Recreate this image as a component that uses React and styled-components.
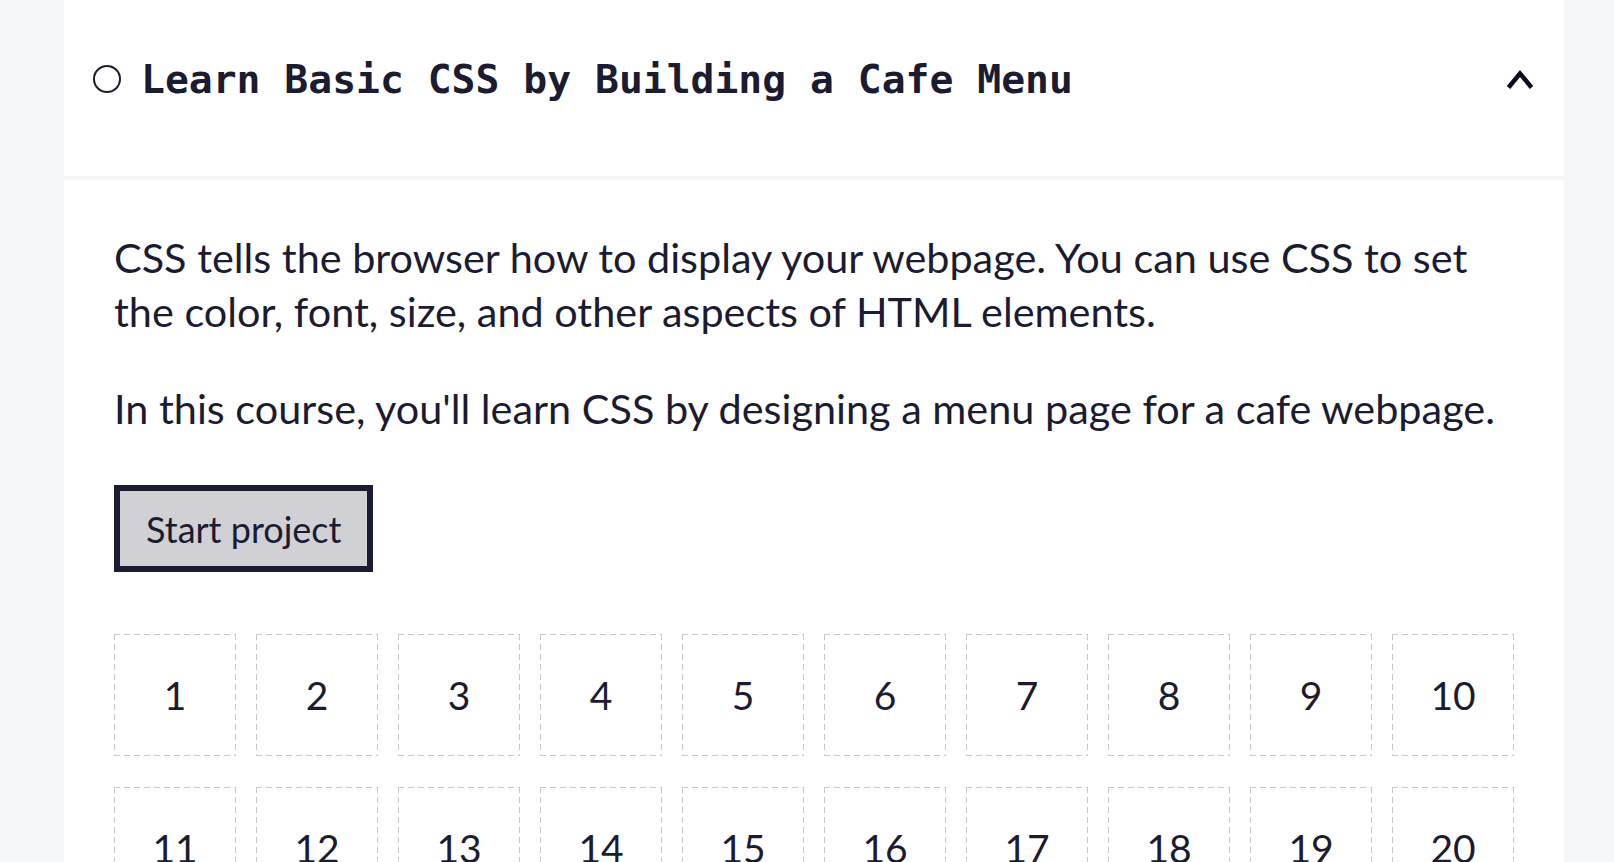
import React from "react";
import styled, { createGlobalStyle } from "styled-components";

const Global = createGlobalStyle`
  html, body { margin: 0; padding: 0; }
  body {
    background: #f5f6f7;
    color: #1b1b32;
    font-family: Lato, "Noto Sans", sans-serif;
  }
`;

const Page = styled.div`
  width: 1500px;
  margin-left: 64px;
  height: 862px;
  overflow: hidden;
`;

const Header = styled.div`
  height: 176px;
  box-sizing: border-box;
  background: #ffffff;
  display: flex;
  align-items: center;
  padding: 0 30px 18px 29px;
  margin-bottom: 4px;
`;

const Circle = styled.span`
  width: 28px;
  height: 28px;
  box-sizing: border-box;
  border: 2px solid #1b1b32;
  border-radius: 50%;
  flex: none;
  margin-right: 20px;
`;

const Title = styled.h3`
  margin: 0;
  flex: 1;
  font-family: "DejaVu Sans Mono", "Liberation Mono", monospace;
  font-weight: 700;
  font-size: 39.7px;
  color: #1b1b32;
`;

const Chevron = styled.svg`
  width: 28px;
  height: 20px;
  flex: none;
`;

const Body = styled.div`
  background: #ffffff;
  padding: 50px 50px 60px;
`;

const Para = styled.p`
  margin: 0;
  font-size: 41.4px;
  line-height: 54px;
  color: #1b1b32;
  & + & {
    margin-top: 43px;
  }
`;

const StartButton = styled.button`
  display: block;
  margin: 50px 0 62px;
  height: 87px;
  padding: 0 26px;
  background: #d0d0d5;
  border: 6px solid #1b1b32;
  color: #1b1b32;
  font-family: Lato, "Noto Sans", sans-serif;
  font-size: 36px;
  cursor: pointer;
`;

const Grid = styled.div`
  display: grid;
  grid-template-columns: repeat(10, 122px);
  column-gap: 20px;
  row-gap: 31px;
`;

const dash = "#c6c6cc";

const Step = styled.div`
  height: 122px;
  box-sizing: border-box;
  display: flex;
  align-items: center;
  justify-content: center;
  font-size: 39px;
  color: #1b1b32;
  background-image:
    repeating-linear-gradient(to right, ${dash} 0 6px, transparent 6px 10px),
    repeating-linear-gradient(to right, ${dash} 0 6px, transparent 6px 10px),
    repeating-linear-gradient(to bottom, ${dash} 0 6px, transparent 6px 10px),
    repeating-linear-gradient(to bottom, ${dash} 0 6px, transparent 6px 10px);
  background-size: 100% 1px, 100% 1px, 1px 100%, 1px 100%;
  background-position: 0 0, 0 100%, 0 0, 100% 0;
  background-repeat: no-repeat;
`;

export default function App() {
  const steps = Array.from({ length: 20 }, (_, i) => i + 1);
  return (
    <>
      <Global />
      <Page>
        <Header>
          <Circle />
          <Title>Learn Basic CSS by Building a Cafe Menu</Title>
          <Chevron viewBox="0 0 28 20">
            <path d="M2.5 18.5 L14 4.5 L25.5 18.5" fill="none" stroke="#0a0a23" strokeWidth="4.5" strokeLinejoin="miter" />
          </Chevron>
        </Header>
        <Body>
          <Para>
            CSS tells the browser how to display your webpage. You can use CSS to set the color, font, size, and other aspects of HTML elements.
          </Para>
          <Para>
            In this course, you'll learn CSS by designing a menu page for a cafe webpage.
          </Para>
          <StartButton>Start project</StartButton>
          <Grid>
            {steps.map((n) => (
              <Step key={n}>{n}</Step>
            ))}
          </Grid>
        </Body>
      </Page>
    </>
  );
}
